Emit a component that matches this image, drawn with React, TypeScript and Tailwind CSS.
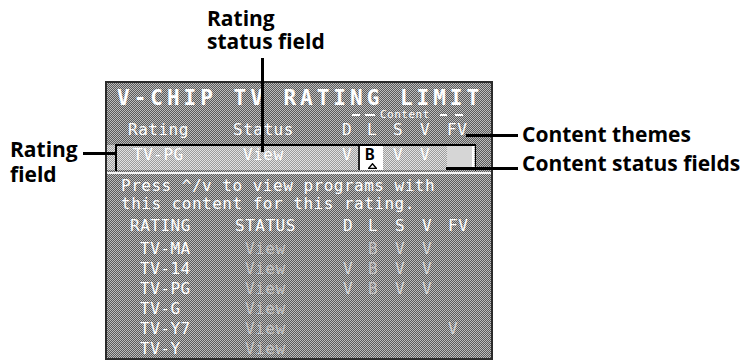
import React from "react";

const mono = "font-['DejaVu_Sans_Mono','Liberation_Mono',monospace]";
const panelBg =
  "bg-[conic-gradient(#5a5a5a_25%,#bcbcbc_0_50%,#5a5a5a_0_75%,#bcbcbc_0)] bg-[length:2px_2px]";
const hiBg =
  "bg-[conic-gradient(#9c9c9c_25%,#e2e2e2_0_50%,#9c9c9c_0_75%,#e2e2e2_0)] bg-[length:2px_2px]";

type LowerRow = { name: string; d?: string; l?: string; s?: string; v?: string; fv?: string };

const rows: LowerRow[] = [
  { name: "TV-MA", l: "B", s: "V", v: "V" },
  { name: "TV-14", d: "V", l: "B", s: "V", v: "V" },
  { name: "TV-PG", d: "V", l: "B", s: "V", v: "V" },
  { name: "TV-G" },
  { name: "TV-Y7", fv: "V" },
  { name: "TV-Y" },
];

function Caret() {
  return (
    <svg width="9" height="6" viewBox="0 0 9 6" className="absolute bottom-[1px] left-[8px]">
      <path d="M0.5 5.5 L4.5 0.8 L8.5 5.5 Z" fill="none" stroke="#000" strokeWidth="1.4" />
    </svg>
  );
}

export default function App() {
  return (
    <div className="relative w-[740px] h-[361px] bg-white overflow-hidden font-['Open_Sans',sans-serif]">
      <div className="pt-[81px] pl-[105px]">
        <div
          className={`w-[388px] h-[279px] border-2 border-[#2b2b2b] overflow-hidden text-white text-[16px] tracking-[0.5px] ${panelBg} ${mono}`}
        >
          {/* Title */}
          <div className="mt-[4px] h-[23px] leading-[23px] pl-[10px] text-[21px] font-bold tracking-[4px] whitespace-nowrap">
            V-CHIP TV RATING LIMIT
          </div>
          {/* Content group label */}
          <div className="h-[10px] flex items-center pl-[245px]">
            <span className="w-[8px] h-[2px] bg-white" />
            <span className="ml-[5px] w-[10px] h-[2px] bg-white" />
            <span className="ml-[5px] w-[53px] text-[11px] leading-[10px] tracking-[0.5px]">Content</span>
            <span className="ml-[7px] w-[7px] h-[2px] bg-white" />
            <span className="ml-[8px] w-[8px] h-[2px] bg-white" />
          </div>
          {/* Header row */}
          <div className="h-[20px] leading-[20px] flex pl-[21px] whitespace-nowrap">
            <span className="w-[105px]">Rating</span>
            <span className="w-[109px]">Status</span>
            <span className="w-[25px]">D</span>
            <span className="w-[26px]">L</span>
            <span className="w-[27px]">S</span>
            <span className="w-[27px]">V</span>
            <span>FV</span>
          </div>
          {/* Highlighted row */}
          <div className={`mt-[5px] h-[25px] w-[368px] flex items-stretch pl-[26px] whitespace-nowrap ${hiBg}`}>
            <span className="w-[110px] leading-[20px]">TV-PG</span>
            <span className="w-[99px] leading-[20px]">View</span>
            <span className="w-[16px] leading-[20px]">V</span>
            <span className="relative w-[25px] bg-white border-l-2 border-[#222] text-black font-bold leading-[19px] pl-[5px]">
              B
              <Caret />
            </span>
            <span className="w-[10px]" />
            <span className="w-[27px] leading-[20px]">V</span>
            <span className="w-[27px] leading-[20px]">V</span>
            <span className="w-[27px] bg-[#d6d6d6] border-r-2 border-white" />
          </div>
          {/* Separator */}
          <div className="mt-[2px] h-[2px] bg-[#f2f2f2]" />
          {/* Help text */}
          <div className="mt-[3px] pl-[14px] leading-[18px] whitespace-nowrap">
            <div>Press ^/v to view programs with</div>
            <div>this content for this rating.</div>
          </div>
          {/* Lower header */}
          <div className="mt-[3px] h-[20px] leading-[20px] flex pl-[23px] whitespace-nowrap">
            <span className="w-[105px]">RATING</span>
            <span className="w-[108px]">STATUS</span>
            <span className="w-[25px]">D</span>
            <span className="w-[27px]">L</span>
            <span className="w-[27px]">S</span>
            <span className="w-[26px]">V</span>
            <span>FV</span>
          </div>
          {/* Lower rows */}
          <div className="mt-[3px] flex flex-col">
            {rows.map((r) => (
              <div key={r.name} className="h-[20px] leading-[20px] flex pl-[33px] whitespace-nowrap">
                <span className="w-[105px]">{r.name}</span>
                <span className="w-[98px] text-[#c4c4c4]">View</span>
                <span className="w-[25px] text-[#d4d4d4]">{r.d ?? ""}</span>
                <span className="w-[27px] text-[#c4c4c4]">{r.l ?? ""}</span>
                <span className="w-[27px] text-[#d4d4d4]">{r.s ?? ""}</span>
                <span className="w-[26px] text-[#d4d4d4]">{r.v ?? ""}</span>
                <span className="text-[#d4d4d4]">{r.fv ?? ""}</span>
              </div>
            ))}
          </div>
        </div>
      </div>

      {/* Annotation: Rating status field */}
      <div className="absolute left-[207px] top-[7px] text-[21px] leading-[23px] font-bold text-black whitespace-nowrap">
        <div>Rating</div>
        <div>status field</div>
      </div>
      <div className="absolute left-[261px] top-[58px] w-[3px] h-[94px] bg-black" />

      {/* Annotation: Rating field */}
      <div className="absolute left-[10px] top-[137px] text-[21px] leading-[25px] font-bold text-black whitespace-nowrap">
        <div>Rating</div>
        <div>field</div>
      </div>
      <div className="absolute left-[83px] top-[152px] w-[34px] h-[3px] bg-black" />
      <div className="absolute left-[115px] top-[144px] w-[361px] h-[27px] border-t-2 border-l-2 border-r border-black" />

      {/* Annotation: Content themes */}
      <div className="absolute left-[466px] top-[134px] w-[52px] h-[3px] bg-black" />
      <div className="absolute left-[522px] top-[123px] text-[21px] leading-[23px] font-bold text-black whitespace-nowrap">
        Content themes
      </div>

      {/* Annotation: Content status fields */}
      <div className="absolute left-[446px] top-[167px] w-[72px] h-[3px] bg-black" />
      <div className="absolute left-[522px] top-[152px] text-[21px] leading-[23px] font-bold text-black whitespace-nowrap">
        Content status fields
      </div>
    </div>
  );
}
